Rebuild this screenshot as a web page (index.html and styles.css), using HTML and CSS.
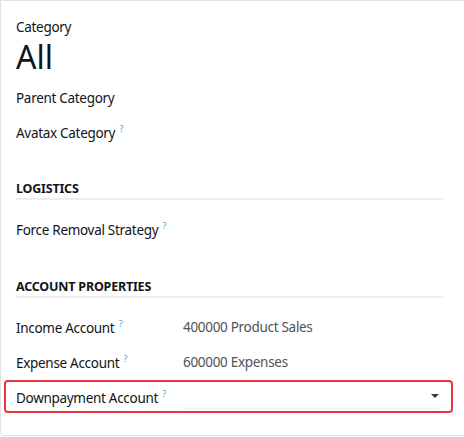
FILE: index.html
```html
<!DOCTYPE html>
<html lang="en">
<head>
  <meta charset="UTF-8" />
  <title>Product Category</title>
  <link rel="stylesheet" href="styles.css">
</head>
<body>

  <div class="sheet">
    <div class="title-label">Category</div>
    <h1 class="title">All</h1>

    <div class="field">
      <label>Parent Category</label>
      <span class="value"></span>
    </div>
    <div class="field">
      <label>Avatax Category <sup>?</sup></label>
      <span class="value"></span>
    </div>

    <div class="group">
      <h2>LOGISTICS</h2>
      <div class="field">
        <label>Force Removal Strategy <sup>?</sup></label>
        <span class="value"></span>
      </div>
    </div>

    <div class="group accounts">
      <h2>ACCOUNT PROPERTIES</h2>
      <div class="field">
        <label>Income Account <sup>?</sup></label>
        <span class="value">400000 Product Sales</span>
      </div>
      <div class="field">
        <label>Expense Account <sup>?</sup></label>
        <span class="value">600000 Expenses</span>
      </div>
      <div class="field highlight">
        <label>Downpayment Account <sup>?</sup></label>
        <div class="select">
          <span class="caret"></span>
        </div>
      </div>
    </div>
  </div>

</body>
</html>
```

FILE: styles.css
```css
body {
  margin: 0;
  background: #ffffff;
  font-family: "Noto Sans", "Open Sans", sans-serif;
  color: #111418;
  overflow: hidden;
}

.sheet {
  width: 480px;
  height: 436px;
  border: 1px solid #e2e2e2;
  border-radius: 0 0 0 4px;
  box-sizing: border-box;
  padding: 16px 0 0 15px;
}

.title-label {
  font-size: 13.5px;
  letter-spacing: -0.3px;
  line-height: 20px;
}

.title {
  margin: 0 0 4px;
  font-size: 32px;
  font-weight: 400;
  line-height: 40px;
}

.field {
  display: grid;
  grid-template-columns: 167px 1fr;
  align-items: center;
  min-height: 34px;
  font-size: 13.5px;
  letter-spacing: -0.3px;
}

.field label {
  white-space: nowrap;
}

sup {
  color: #5a9fbe;
  font-size: 9px;
  letter-spacing: 0;
  vertical-align: 6px;
  margin-left: 1px;
}

.value {
  color: #4d5359;
}

.group {
  width: 427px;
  margin-top: 31px;
}

.group h2 {
  margin: 0 0 12px;
  font-size: 12.5px;
  font-weight: 700;
  letter-spacing: -0.2px;
  line-height: 18px;
  border-bottom: 2px solid #eeeeee;
}

.accounts {
  margin-top: 32px;
}

.accounts h2 {
  margin-bottom: 11px;
}

.accounts .field {
  min-height: 35px;
}

.accounts .highlight {
  width: 449px;
  box-sizing: border-box;
  margin: 1px 0 0 -12px;
  padding: 0 0 0 10px;
  border: 2px solid #e8363f;
  border-radius: 4px;
  min-height: 33px;
}

.select {
  position: relative;
  height: 24px;
  margin-right: 12px;
  border-bottom: 1px solid #f0f0f0;
}

.caret {
  position: absolute;
  right: 0;
  top: 10px;
  border-left: 4px solid transparent;
  border-right: 4px solid transparent;
  border-top: 4px solid #343a40;
}
```
